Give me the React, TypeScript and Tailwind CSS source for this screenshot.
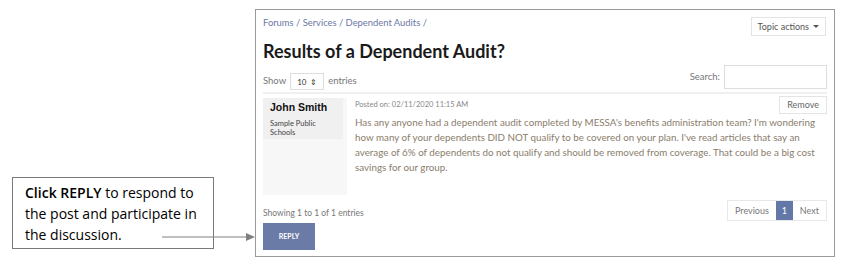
export default function App() {
  return (
    <div className="relative w-[850px] h-[270px] bg-white" style={{ fontFamily: "Lato, 'Open Sans', sans-serif" }}>
      {/* screenshot panel */}
      <div className="absolute left-[255px] top-[9px] w-[580px] h-[248px] border border-[#9a9a9a] px-[7px] pt-[4px]">
        <div className="flex justify-between items-start">
          <p className="text-[9.4px] text-[#6b78a5] mt-[2px]">
            Forums / Services / Dependent Audits /
          </p>
          <button className="mt-[3px] mr-[1px] h-[19px] px-[6px] border border-[#e4e4e4] text-[9px] text-[#555] flex items-center gap-[4px]">
            Topic actions
            <span className="w-0 h-0 border-l-[3px] border-r-[3px] border-t-[3px] border-l-transparent border-r-transparent border-t-[#555]" />
          </button>
        </div>

        <h1 className="text-[18px] font-bold text-[#1a1a1a] leading-none mt-[6px]">
          Results of a Dependent Audit?
        </h1>

        <div className="flex justify-between items-end mt-[5px]">
          <div className="flex items-center gap-[4px] text-[9.5px] text-[#777] -mb-px">
            Show
            <div className="w-[34px] h-[17px] border border-[#ddd] flex items-center justify-between px-[6px] text-[8px] text-[#333]">
              10<span className="text-[8px] leading-none">⇕</span>
            </div>
            entries
          </div>
          <div className="flex items-center gap-[4px] text-[9.5px] text-[#777]">
            Search:
            <div className="w-[103px] h-[24px] border border-[#ddd]" />
          </div>
        </div>

        <div className="h-[2px] bg-[#f0f0f0] mt-[3px]" />

        <div className="flex mt-[4px]">
          <div className="w-[84px] h-[97px] bg-[#f7f7f7] shrink-0">
            <div className="w-[80px] h-[41px] bg-[#f0f0f0] px-[7px] pt-[4px]">
              <p className="text-[10.5px] font-bold text-[#111] leading-none" style={{ fontFamily: "'Liberation Sans', sans-serif" }}>John Smith</p>
              <p className="text-[7.5px] text-[#444] leading-[9px] mt-[6px]">Sample Public<br />Schools</p>
            </div>
          </div>
          <div className="flex-1 pl-[8px]">
            <div className="flex justify-between items-start">
              <p className="text-[7.5px] text-[#888] mt-[1px]">Posted on: 02/11/2020 11:15 AM</p>
              <button className="-mt-[2px] h-[18px] px-[7px] border border-[#e4e4e4] text-[9px] text-[#666]">Remove</button>
            </div>
            <p className="text-[9.8px] text-[#8a7d6c] leading-[15px] mt-[1px] pr-[6px]">
              Has any anyone had a dependent audit completed by MESSA's benefits administration team? I'm wondering how many of your dependents DID NOT qualify to be covered on your plan. I've read articles that say an average of 6% of dependents do not qualify and should be removed from coverage. That could be a big cost savings for our group.
            </p>
          </div>
        </div>

        <div className="flex justify-between items-start mt-[5px]">
          <div>
            <p className="text-[8.5px] text-[#777] mt-[7px]">Showing 1 to 1 of 1 entries</p>
            <button className="mt-[3px] w-[52px] h-[27px] bg-[#6a7ba8] text-white text-[7px] font-bold">REPLY</button>
          </div>
          <div className="flex h-[21px] border border-[#e8e8e8] text-[9px] text-[#777]">
            <span className="px-[7px] flex items-center">Previous</span>
            <span className="w-[17px] bg-[#6478a8] text-white flex items-center justify-center">1</span>
            <span className="px-[7px] flex items-center">Next</span>
          </div>
        </div>
      </div>

      {/* callout annotation */}
      <div
        className="absolute left-[12px] top-[177px] w-[202px] h-[72px] border border-[#7a7a7a] pl-[12px] pt-[4px] text-[14px] leading-[21px] text-black"
        style={{ fontFamily: "'Open Sans', sans-serif" }}
      >
        <p><b className="font-semibold">Click REPLY</b> to respond to</p>
        <p>the post and participate in</p>
        <p>the discussion.</p>
      </div>
      <svg className="absolute left-[160px] top-[231px]" width="96" height="12">
        <line x1="2" y1="6" x2="88" y2="6" stroke="#808080" strokeWidth="1" />
        <polygon points="86,2 95,6 86,10" fill="#808080" />
      </svg>
    </div>
  )
}
